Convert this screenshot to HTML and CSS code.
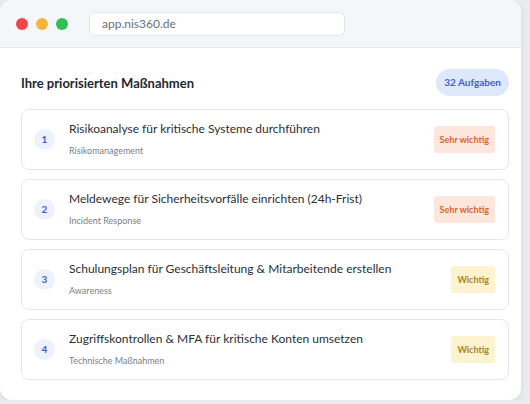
FILE: index.html
```html
<!DOCTYPE html>
<html lang="de">
<head>
    <meta charset="UTF-8">
    <meta name="viewport" content="width=device-width, initial-scale=1.0">
    <title>NIS360</title>
    <link rel="stylesheet" href="styles.css">
</head>
<body>
    <div class="window">
        <div class="titlebar">
            <span class="dot red"></span>
            <span class="dot yellow"></span>
            <span class="dot green"></span>
            <div class="url">app.nis360.de</div>
        </div>
        <div class="content">
            <div class="head">
                <h2>Ihre priorisierten Maßnahmen</h2>
                <span class="count">32 Aufgaben</span>
            </div>

            <div class="task">
                <span class="num">1</span>
                <div class="info">
                    <div class="title">Risikoanalyse für kritische Systeme durchführen</div>
                    <div class="cat">Risikomanagement</div>
                </div>
                <span class="prio high">Sehr wichtig</span>
            </div>

            <div class="task">
                <span class="num">2</span>
                <div class="info">
                    <div class="title">Meldewege für Sicherheitsvorfälle einrichten (24h-Frist)</div>
                    <div class="cat">Incident Response</div>
                </div>
                <span class="prio high">Sehr wichtig</span>
            </div>

            <div class="task">
                <span class="num">3</span>
                <div class="info">
                    <div class="title">Schulungsplan für Geschäftsleitung &amp; Mitarbeitende erstellen</div>
                    <div class="cat">Awareness</div>
                </div>
                <span class="prio mid">Wichtig</span>
            </div>

            <div class="task">
                <span class="num">4</span>
                <div class="info">
                    <div class="title">Zugriffskontrollen &amp; MFA für kritische Konten umsetzen</div>
                    <div class="cat">Technische Maßnahmen</div>
                </div>
                <span class="prio mid">Wichtig</span>
            </div>
        </div>
    </div>
</body>
</html>
```

FILE: styles.css
```css
body { margin: 0; background: #e9ebef; font-family: "Lato", "Inter", sans-serif; color: #2b2f36; }
.window { width: 521px; height: 400px; background: #fff; border-radius: 12px; overflow: hidden; box-shadow: 0 2px 6px rgba(0,0,0,0.08); }
.titlebar { height: 48px; background: #f5f6f9; border-bottom: 1px solid #e6e8ec; display: flex; align-items: center; padding-left: 16px; box-sizing: border-box; }
.dot { width: 12px; height: 12px; border-radius: 50%; margin-right: 8px; }
.red { background: #f0484a; }
.yellow { background: #f7b43a; }
.green { background: #2fc253; }
.url { margin-left: 13px; width: 256px; height: 24px; box-sizing: border-box; background: #fff; border: 1px solid #e4e6ea; border-radius: 6px; padding-left: 12px; line-height: 22px; font-size: 12px; color: #6b7079; }
.content { padding: 21px 12px 0 21px; }
.head { display: flex; align-items: center; justify-content: space-between; height: 27px; margin-bottom: 13px; }
.head h2 { margin: 0; font-size: 13px; font-weight: 700; color: #24282e; }
.count { background: #dfe8fb; color: #3f5fd0; font-size: 10px; font-weight: 700; padding: 0 8px; height: 27px; line-height: 27px; border-radius: 14px; }
.task { display: flex; align-items: center; height: 61px; box-sizing: border-box; border: 1px solid #e4e6ea; border-radius: 8px; margin-bottom: 9px; padding: 0 13px 0 12px; }
.num { width: 21px; height: 21px; border-radius: 50%; background: #eef2fc; color: #3f5fd0; font-size: 10px; font-weight: 700; text-align: center; line-height: 21px; margin-right: 14px; flex: none; }
.info { flex: 1; }
.title { font-size: 12px; color: #2b2f36; margin-bottom: 9px; margin-top: -2px; }
.cat { font-size: 9px; color: #7a7f88; }
.prio { font-size: 9px; font-weight: 700; height: 27px; line-height: 27px; padding: 0 6px; border-radius: 3px; }
.high { background: #fde6db; color: #d5652f; }
.mid { background: #fdf3cf; color: #a7851c; }
```
